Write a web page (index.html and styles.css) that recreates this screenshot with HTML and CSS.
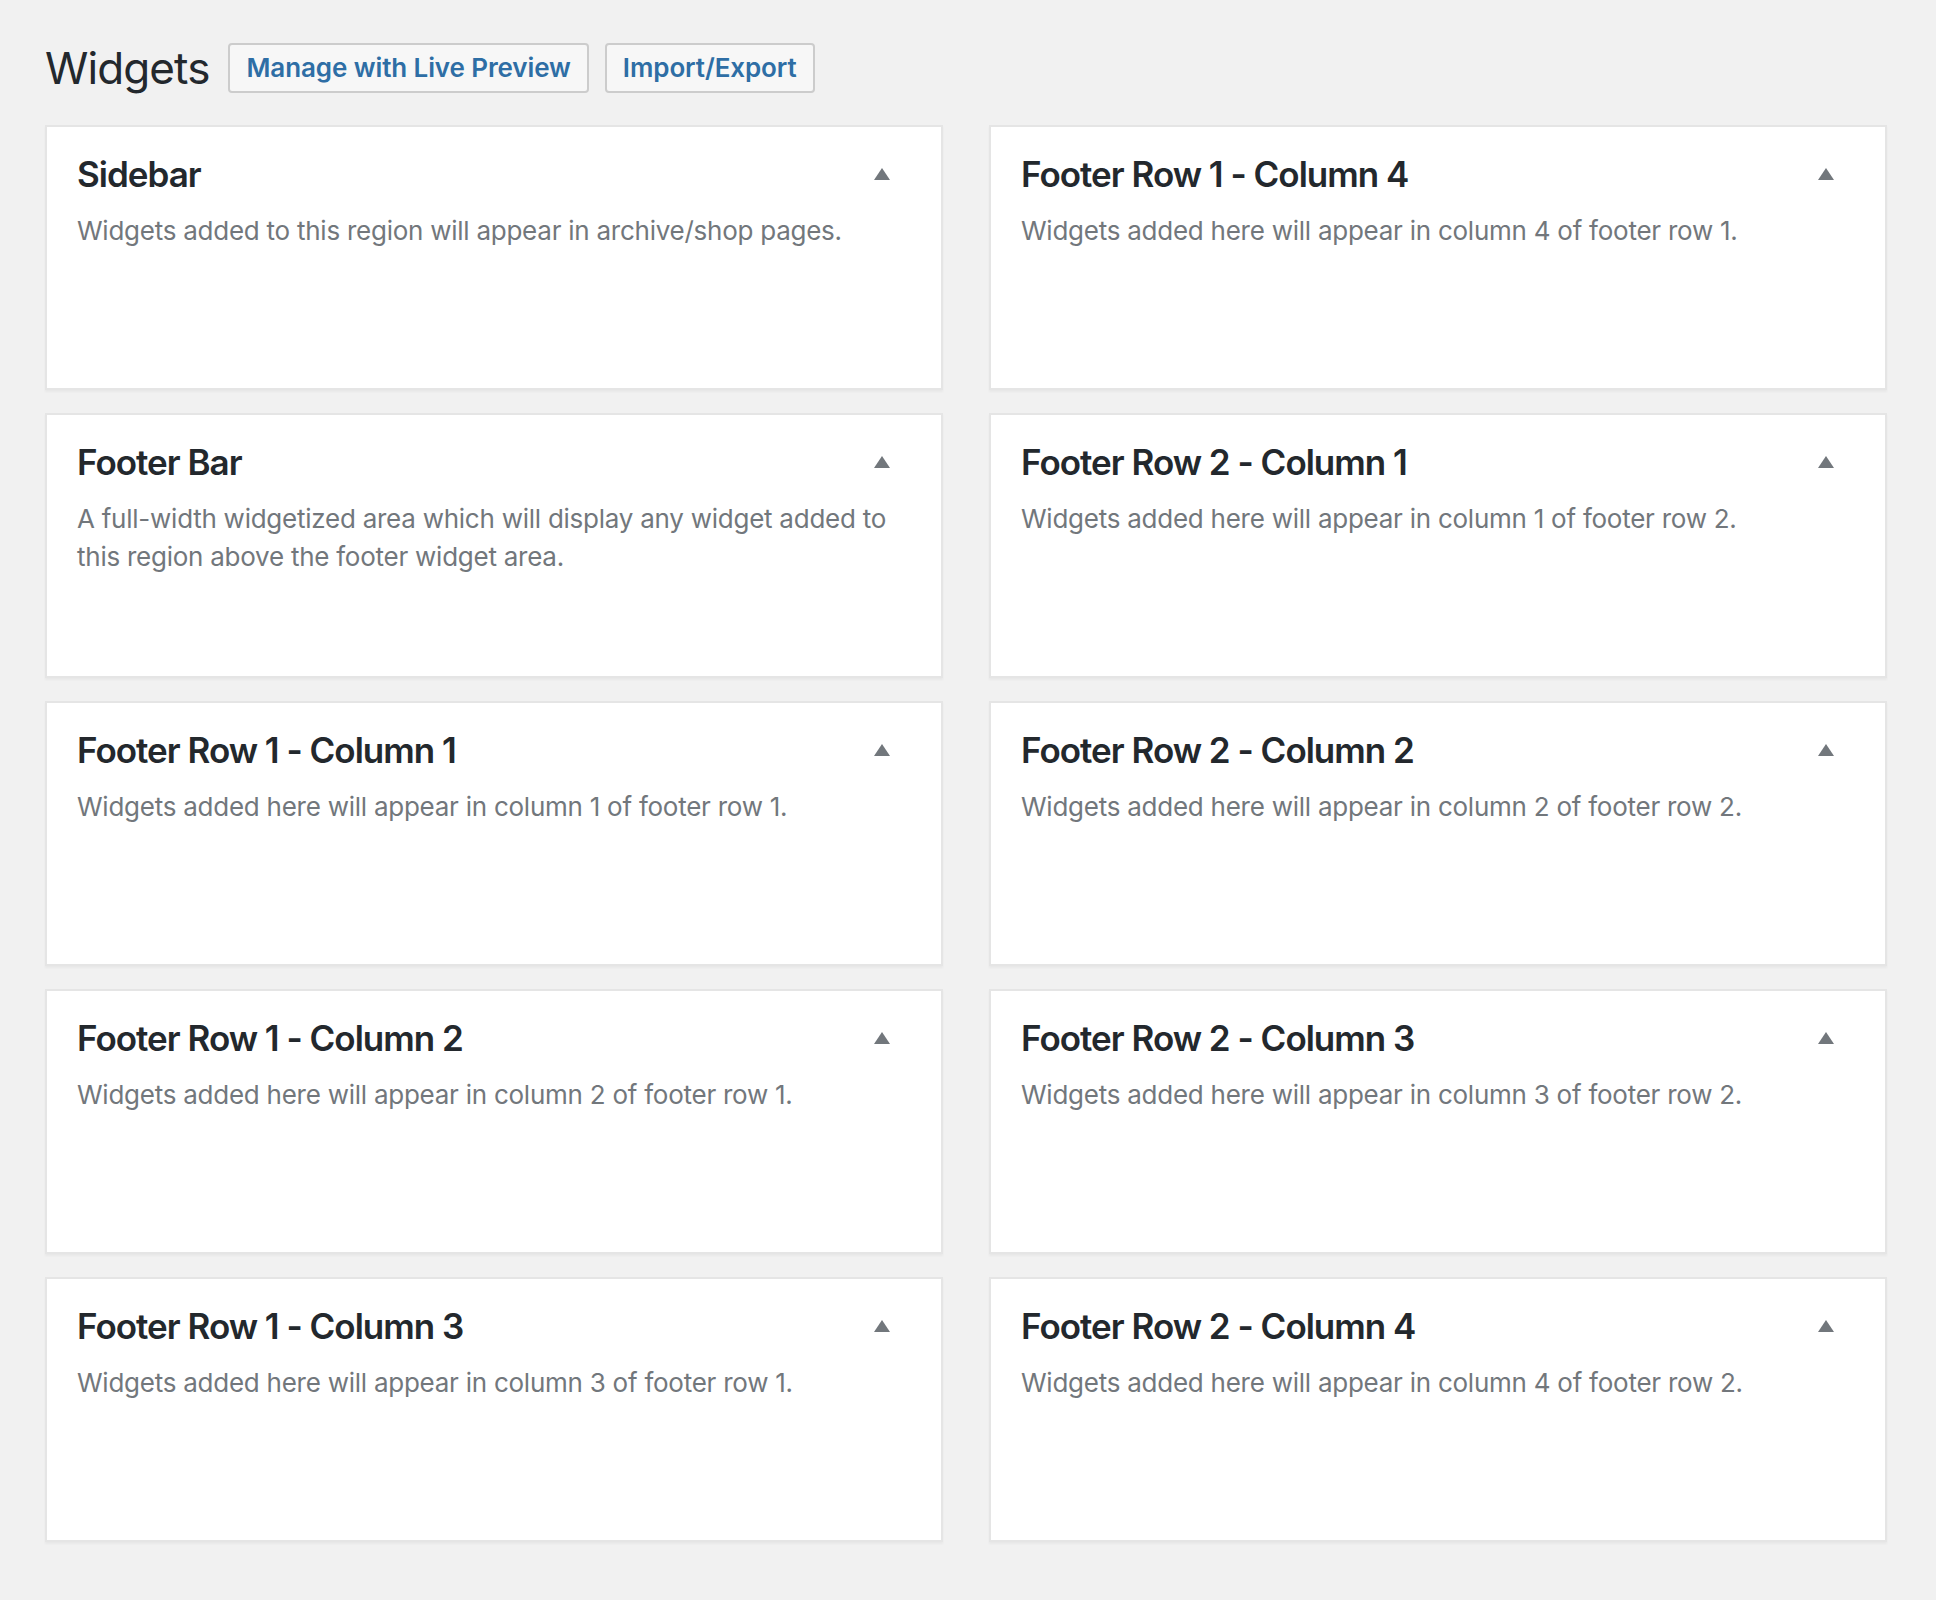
FILE: index.html
```html
<!DOCTYPE html>
<html lang="en">
<head>
<meta charset="utf-8">
<title>Widgets</title>
<link rel="stylesheet" href="styles.css">
</head>
<body>
<div class="wrap">
  <header class="page-head">
    <h1 class="page-title">Widgets</h1>
    <a class="title-action" href="#">Manage with Live Preview</a>
    <a class="title-action" href="#">Import/Export</a>
  </header>
  <div class="columns">
    <div class="column">
      <section class="area">
        <div class="area-head"><h2 class="area-name">Sidebar</h2><span class="toggle"><svg width="16" height="12" viewBox="0 0 16 12"><polygon points="8,0 16,12 0,12"/></svg></span></div>
        <p class="area-desc">Widgets added to this region will appear in archive/shop pages.</p>
      </section>
      <section class="area">
        <div class="area-head"><h2 class="area-name">Footer Bar</h2><span class="toggle"><svg width="16" height="12" viewBox="0 0 16 12"><polygon points="8,0 16,12 0,12"/></svg></span></div>
        <p class="area-desc">A full-width widgetized area which will display any widget added to this region above the footer widget area.</p>
      </section>
      <section class="area">
        <div class="area-head"><h2 class="area-name">Footer Row 1 - Column 1</h2><span class="toggle"><svg width="16" height="12" viewBox="0 0 16 12"><polygon points="8,0 16,12 0,12"/></svg></span></div>
        <p class="area-desc">Widgets added here will appear in column 1 of footer row 1.</p>
      </section>
      <section class="area">
        <div class="area-head"><h2 class="area-name">Footer Row 1 - Column 2</h2><span class="toggle"><svg width="16" height="12" viewBox="0 0 16 12"><polygon points="8,0 16,12 0,12"/></svg></span></div>
        <p class="area-desc">Widgets added here will appear in column 2 of footer row 1.</p>
      </section>
      <section class="area">
        <div class="area-head"><h2 class="area-name">Footer Row 1 - Column 3</h2><span class="toggle"><svg width="16" height="12" viewBox="0 0 16 12"><polygon points="8,0 16,12 0,12"/></svg></span></div>
        <p class="area-desc">Widgets added here will appear in column 3 of footer row 1.</p>
      </section>
    </div>
    <div class="column">
      <section class="area">
        <div class="area-head"><h2 class="area-name">Footer Row 1 - Column 4</h2><span class="toggle"><svg width="16" height="12" viewBox="0 0 16 12"><polygon points="8,0 16,12 0,12"/></svg></span></div>
        <p class="area-desc">Widgets added here will appear in column 4 of footer row 1.</p>
      </section>
      <section class="area">
        <div class="area-head"><h2 class="area-name">Footer Row 2 - Column 1</h2><span class="toggle"><svg width="16" height="12" viewBox="0 0 16 12"><polygon points="8,0 16,12 0,12"/></svg></span></div>
        <p class="area-desc">Widgets added here will appear in column 1 of footer row 2.</p>
      </section>
      <section class="area">
        <div class="area-head"><h2 class="area-name">Footer Row 2 - Column 2</h2><span class="toggle"><svg width="16" height="12" viewBox="0 0 16 12"><polygon points="8,0 16,12 0,12"/></svg></span></div>
        <p class="area-desc">Widgets added here will appear in column 2 of footer row 2.</p>
      </section>
      <section class="area">
        <div class="area-head"><h2 class="area-name">Footer Row 2 - Column 3</h2><span class="toggle"><svg width="16" height="12" viewBox="0 0 16 12"><polygon points="8,0 16,12 0,12"/></svg></span></div>
        <p class="area-desc">Widgets added here will appear in column 3 of footer row 2.</p>
      </section>
      <section class="area">
        <div class="area-head"><h2 class="area-name">Footer Row 2 - Column 4</h2><span class="toggle"><svg width="16" height="12" viewBox="0 0 16 12"><polygon points="8,0 16,12 0,12"/></svg></span></div>
        <p class="area-desc">Widgets added here will appear in column 4 of footer row 2.</p>
      </section>
    </div>
  </div>
</div>
</body>
</html>
```

FILE: styles.css
```css
html, body {
  margin: 0;
  padding: 0;
  background: #f1f1f1;
}

body {
  font-family: Inter, "Noto Sans", "Liberation Sans", sans-serif;
  color: #23282d;
}

.wrap {
  padding: 43px 49px 40px 45px;
}

.page-head {
  display: flex;
  align-items: center;
  height: 50px;
}

.page-title {
  margin: 0 19px 0 0;
  font-size: 44px;
  line-height: 50px;
  font-weight: 400;
  letter-spacing: -0.9px;
  color: #23282d;
}

.title-action {
  display: block;
  box-sizing: border-box;
  height: 50px;
  line-height: 46px;
  padding: 0 16px;
  border: 2px solid #cccccc;
  border-radius: 4px;
  background: #f7f7f7;
  color: #2e6ea5;
  font-size: 26px;
  font-weight: 600;
  letter-spacing: -0.1px;
  text-decoration: none;
  margin-right: 16px;
}

.columns {
  display: flex;
  gap: 46px;
  margin-top: 32px;
}

.column {
  flex: 1 1 0;
  display: flex;
  flex-direction: column;
  gap: 23px;
}

.area {
  box-sizing: border-box;
  height: 265px;
  background: #fff;
  border: 2px solid #e5e5e5;
  box-shadow: 0 2px 2px rgba(0, 0, 0, 0.04);
  padding: 29px 30px 0 30px;
}

.area-head {
  display: flex;
  align-items: center;
  justify-content: space-between;
}

.area-name {
  margin: 0;
  font-size: 35px;
  line-height: 36px;
  font-weight: 600;
  letter-spacing: -1px;
  color: #23282d;
  white-space: nowrap;
}

.toggle {
  display: block;
  width: 16px;
  height: 12px;
  margin-right: 21px;
}

.toggle svg {
  display: block;
  fill: #72777c;
}

.area-desc {
  margin: 20px 0 0 0;
  font-size: 26px;
  line-height: 38px;
  letter-spacing: -0.25px;
  color: #72777c;
}
```
